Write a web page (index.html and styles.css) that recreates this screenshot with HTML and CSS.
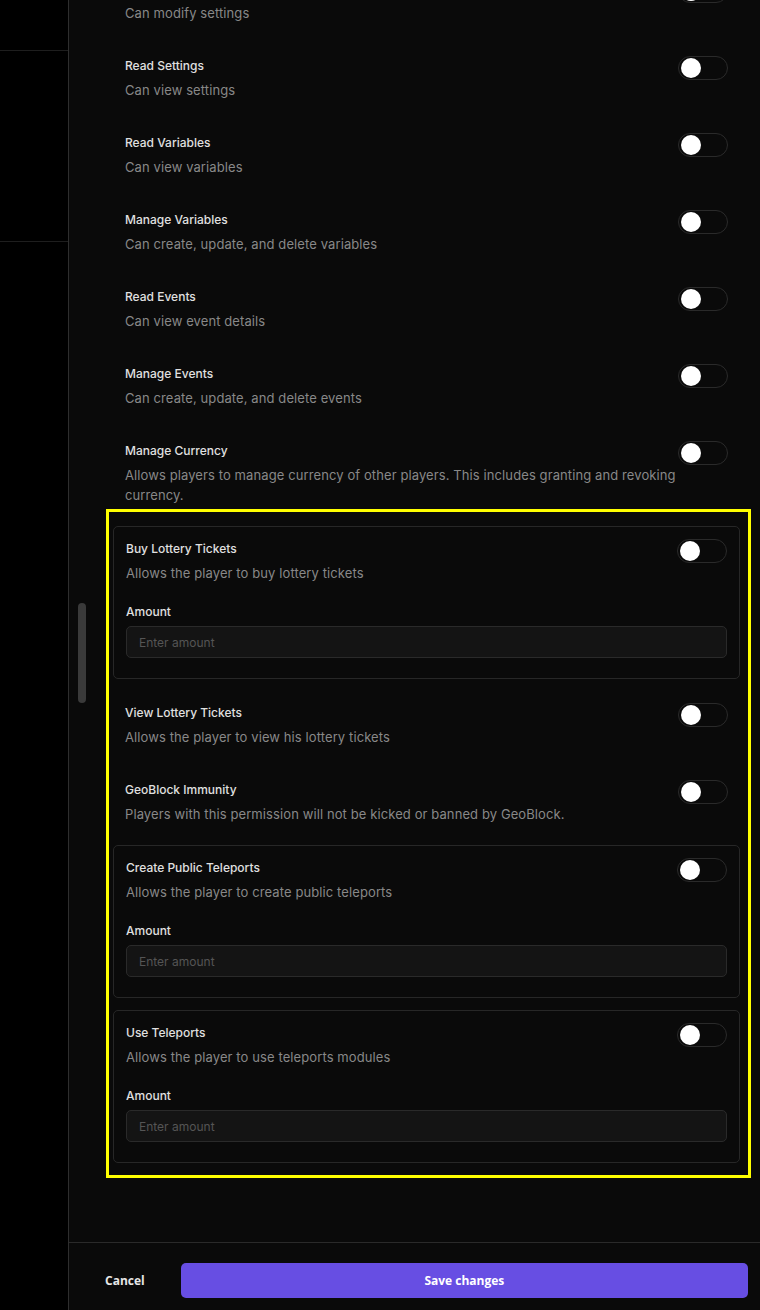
FILE: index.html
```html
<!DOCTYPE html>
<html lang="en">
<head>
<meta charset="utf-8">
<title>Permissions</title>
<link rel="stylesheet" href="styles.css">
</head>
<body>
<div class="app">
  <aside class="sidebar">
    <div class="side-sec side-top"></div>
    <div class="side-sec side-mid"></div>
  </aside>
  <main class="panel">
    <div class="scroll">
      <div class="list">
        <div class="perm">
          <div class="perm-head"><span class="perm-title">Manage Settings</span><span class="toggle"><span class="knob"></span></span></div>
          <p class="perm-desc">Can modify settings</p>
        </div>
        <div class="perm">
          <div class="perm-head"><span class="perm-title">Read Settings</span><span class="toggle"><span class="knob"></span></span></div>
          <p class="perm-desc">Can view settings</p>
        </div>
        <div class="perm">
          <div class="perm-head"><span class="perm-title">Read Variables</span><span class="toggle"><span class="knob"></span></span></div>
          <p class="perm-desc">Can view variables</p>
        </div>
        <div class="perm">
          <div class="perm-head"><span class="perm-title">Manage Variables</span><span class="toggle"><span class="knob"></span></span></div>
          <p class="perm-desc">Can create, update, and delete variables</p>
        </div>
        <div class="perm">
          <div class="perm-head"><span class="perm-title">Read Events</span><span class="toggle"><span class="knob"></span></span></div>
          <p class="perm-desc">Can view event details</p>
        </div>
        <div class="perm">
          <div class="perm-head"><span class="perm-title">Manage Events</span><span class="toggle"><span class="knob"></span></span></div>
          <p class="perm-desc">Can create, update, and delete events</p>
        </div>
        <div class="perm">
          <div class="perm-head"><span class="perm-title">Manage Currency</span><span class="toggle"><span class="knob"></span></span></div>
          <p class="perm-desc">Allows players to manage currency of other players. This includes granting and revoking currency.</p>
        </div>

        <div class="highlight">
          <div class="perm perm-card">
            <div class="perm-head"><span class="perm-title">Buy Lottery Tickets</span><span class="toggle"><span class="knob"></span></span></div>
            <p class="perm-desc">Allows the player to buy lottery tickets</p>
            <label class="amount">
              <span class="amount-label">Amount</span>
              <input class="amount-input" type="text" placeholder="Enter amount">
            </label>
          </div>
          <div class="perm">
            <div class="perm-head"><span class="perm-title">View Lottery Tickets</span><span class="toggle"><span class="knob"></span></span></div>
            <p class="perm-desc">Allows the player to view his lottery tickets</p>
          </div>
          <div class="perm">
            <div class="perm-head"><span class="perm-title">GeoBlock Immunity</span><span class="toggle"><span class="knob"></span></span></div>
            <p class="perm-desc">Players with this permission will not be kicked or banned by GeoBlock.</p>
          </div>
          <div class="perm perm-card">
            <div class="perm-head"><span class="perm-title">Create Public Teleports</span><span class="toggle"><span class="knob"></span></span></div>
            <p class="perm-desc">Allows the player to create public teleports</p>
            <label class="amount">
              <span class="amount-label">Amount</span>
              <input class="amount-input" type="text" placeholder="Enter amount">
            </label>
          </div>
          <div class="perm perm-card">
            <div class="perm-head"><span class="perm-title">Use Teleports</span><span class="toggle"><span class="knob"></span></span></div>
            <p class="perm-desc">Allows the player to use teleports modules</p>
            <label class="amount">
              <span class="amount-label">Amount</span>
              <input class="amount-input" type="text" placeholder="Enter amount">
            </label>
          </div>
        </div>
      </div>
      <div class="scroll-thumb"></div>
    </div>
    <footer class="footer">
      <button class="btn btn-cancel" type="button">Cancel</button>
      <button class="btn btn-save" type="button">Save changes</button>
    </footer>
  </main>
</div>
</body>
</html>
```

FILE: styles.css
```css
* {
  box-sizing: border-box;
}

html, body {
  margin: 0;
  padding: 0;
  background: #000;
}

body {
  font-family: Inter, "Noto Sans", sans-serif;
  color: #e5e5e5;
  width: 760px;
  height: 1310px;
  overflow: hidden;
}

.app {
  display: flex;
  height: 1310px;
}

.sidebar {
  width: 69px;
  flex: none;
  background: #000;
  border-right: 1px solid #2e2e2e;
  display: flex;
  flex-direction: column;
}

.side-sec {
  border-bottom: 1px solid #1e1e1e;
}

.side-top {
  height: 51px;
}

.side-mid {
  height: 191px;
}

.panel {
  flex: 1;
  display: flex;
  flex-direction: column;
  background: #0a0a0a;
  min-width: 0;
}

.scroll {
  flex: 1;
  position: relative;
  overflow: hidden;
}

.list {
  margin-top: -33px;
  padding: 0 20px 0 44px;
  display: flex;
  flex-direction: column;
}

.perm {
  padding: 12px 12px 21px;
}

.perm-card {
  border: 1px solid #272727;
  border-radius: 5px;
  padding: 12px 12px 20px;
  margin-bottom: 12px;
}

.perm-head {
  display: flex;
  justify-content: space-between;
  align-items: flex-start;
}

.perm-title {
  font-size: 12px;
  line-height: 20px;
  font-weight: 500;
  color: #e0e0e0;
}

.perm-desc {
  margin: 0;
  font-size: 13px;
  line-height: 20px;
  letter-spacing: 0.1px;
  color: #888;
}

.toggle {
  width: 50px;
  height: 24px;
  flex: none;
  border: 1px solid #2a2a2a;
  border-radius: 12px;
  padding: 1px 2px;
  display: flex;
  align-items: center;
}

.knob {
  width: 20px;
  height: 20px;
  border-radius: 50%;
  background: #fff;
}

.amount {
  display: flex;
  flex-direction: column;
  gap: 4px;
  margin-top: 19px;
}

.amount-label {
  font-size: 12px;
  line-height: 20px;
  font-weight: 500;
  color: #e0e0e0;
}

.amount-input {
  height: 32px;
  width: 100%;
  background: #141414;
  border: 1px solid #2a2a2a;
  border-radius: 5px;
  padding: 0 12px;
  font-family: Inter, "Noto Sans", sans-serif;
  font-size: 12px;
  color: #e0e0e0;
  outline: none;
}

.amount-input::placeholder {
  color: #555;
}

.highlight {
  position: relative;
  display: flex;
  flex-direction: column;
}

.highlight::after {
  content: "";
  position: absolute;
  top: -17px;
  left: -7px;
  right: -11px;
  bottom: -3px;
  border: 3px solid #ffff00;
  pointer-events: none;
}

.scroll-thumb {
  position: absolute;
  left: 9px;
  top: 603px;
  width: 8px;
  height: 100px;
  border-radius: 4px;
  background: #3a3a3a;
}

.footer {
  flex: none;
  height: 68px;
  border-top: 1px solid #2a2a2a;
  display: flex;
  align-items: flex-start;
  gap: 20px;
  padding: 20px 12px 0 20px;
}

.btn {
  height: 35px;
  border: none;
  border-radius: 5px;
  font-family: "Open Sans", "DejaVu Sans", sans-serif;
  font-size: 12px;
  font-weight: 700;
  cursor: pointer;
}

.btn-cancel {
  background: transparent;
  color: #e6e6e6;
  padding: 0 16px;
}

.btn-save {
  flex: 1;
  background: #674ee3;
  color: #fff;
}
```
